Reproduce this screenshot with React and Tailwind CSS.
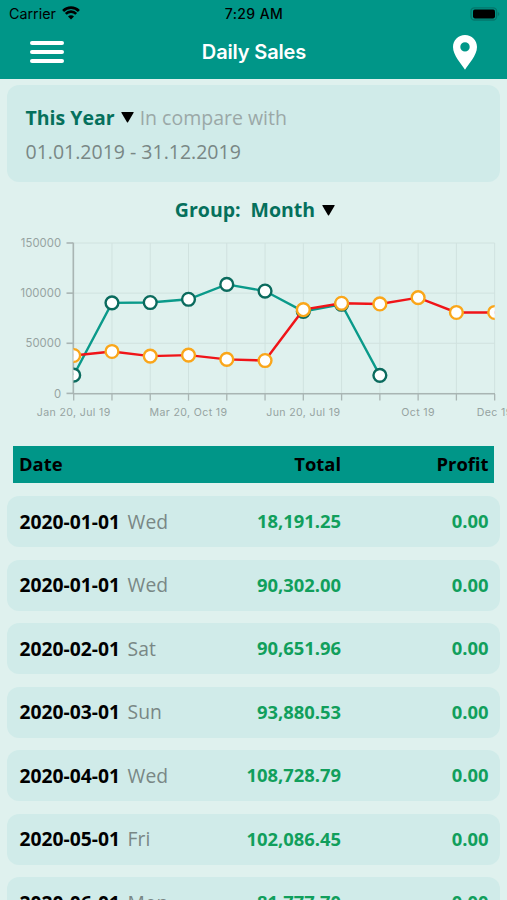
import React from 'react';

const rows = [
  { date: '2020-01-01', day: 'Wed', total: 18191.25, profit: 0 },
  { date: '2020-01-01', day: 'Wed', total: 90302, profit: 0 },
  { date: '2020-02-01', day: 'Sat', total: 90651.96, profit: 0 },
  { date: '2020-03-01', day: 'Sun', total: 93880.53, profit: 0 },
  { date: '2020-04-01', day: 'Wed', total: 108728.79, profit: 0 },
  { date: '2020-05-01', day: 'Fri', total: 102086.45, profit: 0 },
  { date: '2020-06-01', day: 'Mon', total: 81777.7, profit: 0 },
];

const current = [18191, 90302, 90652, 93880, 108729, 102086, 81778, 88900, 18000];
const previous = [37800, 41800, 37200, 38200, 33900, 32800, 83500, 89900, 89200, 95500, 80700, 80700];

const xLabels = [
  { i: 0, text: 'Jan 20, Jul 19' },
  { i: 3, text: 'Mar 20, Oct 19' },
  { i: 6, text: 'Jun 20, Jul 19' },
  { i: 9, text: 'Oct 19' },
  { i: 11, text: 'Dec 19' },
];

const months = [0, 1, 2, 3, 4, 5, 6, 7, 8, 9, 10, 11];
const ticks = [0, 50000, 100000, 150000];

const format = (val) => val.toLocaleString('en-US', { minimumFractionDigits: 2, maximumFractionDigits: 2 });

// chart scales
const px = (i) => 73.7 + i * 38.27;
const py = (v) => 163.4 - (v / 150000) * 150.4;
const toPoints = (values) => values.map((v, i) => `${px(i)},${py(v)}`).join(' ');

const Series = ({ values, line, dot }) => (
  <g>
    <polyline points={toPoints(values)} fill="none" stroke={line} strokeWidth="2.4" />
    {values.map((v, i) => (
      <circle key={i} cx={px(i)} cy={py(v)} r="6.4" fill="#fff" stroke={dot} strokeWidth="2.4" />
    ))}
  </g>
);

const SalesChart = () => (
  <svg width="507" height="200" className="block shrink-0 font-['Inter',sans-serif]">
    <defs>
      <clipPath id="plot">
        <rect x="73.5" y="0" width="421.2" height="170" />
      </clipPath>
    </defs>

    <g stroke="#d0e2df" strokeWidth="1">
      {ticks.map((t) => <line key={t} x1="74" x2="494.7" y1={py(t)} y2={py(t)} />)}
      {months.map((m) => <line key={m} x1={px(m)} x2={px(m)} y1="13" y2="163" />)}
    </g>

    <g stroke="#a9b5b3" strokeWidth="1.6">
      <line x1="73.3" x2="73.3" y1="12.5" y2="164" />
      <line x1="73" x2="495" y1="163.8" y2="163.8" />
      {ticks.map((t) => <line key={t} x1="66.5" x2="73" y1={py(t)} y2={py(t)} />)}
      {months.map((m) => <line key={m} x1={px(m)} x2={px(m)} y1="164" y2="170.5" strokeWidth="1.3" />)}
    </g>

    <g clipPath="url(#plot)">
      <Series values={current} line="#0a9a8a" dot="#0b6b5e" />
      <Series values={previous} line="#f01418" dot="#faa61a" />
    </g>

    <g fill="#96a3a1" fontSize="11.3" letterSpacing="0.1">
      {ticks.map((t) => <text key={t} x="61.3" y={py(t) + 4.2} textAnchor="end">{t}</text>)}
    </g>
    <g fill="#96a3a1" fontSize="10.6" letterSpacing="0.35">
      {xLabels.map((l) => <text key={l.i} x={px(l.i)} y="186.2" textAnchor="middle">{l.text}</text>)}
    </g>
  </svg>
);

const Caret = () => (
  <svg width="13" height="11" viewBox="0 0 13 11" className="shrink-0">
    <path d="M.8 0h11.4q.8 0 .4.8L7 10.2q-.5.8-1 0L.4.8Q0 0 .8 0z" fill="#000" />
  </svg>
);

const Header = () => (
  <header className="h-[79px] shrink-0 bg-[#009688]">
    <div className="grid h-[27px] grid-cols-3 items-center pl-[8px] pr-[7px] text-black">
      <div className="flex items-center gap-[6px] pl-[1px]">
        <span className="pt-px text-[14.3px] leading-none">Carrier</span>
        <svg width="18" height="14" viewBox="0 0 18 14">
          <path d="M9 13.6 6 10.5a4.2 4.2 0 0 1 6 0z" fill="#000" />
          <path d="M3.8 7.9a7.3 7.3 0 0 1 10.4 0M1.1 5a11.1 11.1 0 0 1 15.8 0" fill="none" stroke="#000" strokeWidth="2.7" />
        </svg>
      </div>
      <span className="text-center text-[14px] font-medium leading-none tracking-[0.4px]">7:29 AM</span>
      <svg width="30" height="14" viewBox="0 0 30 14" className="justify-self-end">
        <rect x="1" y=".8" width="25.6" height="12.2" rx="3.5" fill="none" stroke="#04776c" strokeWidth="1.3" />
        <rect x="3" y="2.6" width="22" height="8.8" rx="1.8" fill="#000" />
        <path d="M27.8 5v4q1.6-.5 1.6-2t-1.6-2z" fill="#04776c" />
      </svg>
    </div>

    <div className="grid h-[50px] grid-cols-[1fr_auto_1fr] items-center pl-[30px] pr-[29px]">
      <div className="flex w-[34px] flex-col gap-[5px]">
        <span className="h-[4px] rounded-[2px] bg-white"></span>
        <span className="h-[4px] rounded-[2px] bg-white"></span>
        <span className="h-[4px] rounded-[2px] bg-white"></span>
      </div>
      <h1 className="text-[20px] font-semibold leading-none tracking-[-0.15px] text-white">Daily Sales</h1>
      <svg width="26" height="35" viewBox="0 0 26 35" className="justify-self-end">
        <path d="M13 0C6.2 0 1 5.2 1 12c0 8.4 8.6 17.2 12 22.8C16.4 29.2 25 20.4 25 12 25 5.2 19.8 0 13 0zm0 7.2a4.7 4.7 0 1 1 0 9.4 4.7 4.7 0 0 1 0-9.4z" fill="#fff" />
      </svg>
    </div>
  </header>
);

const App = () => {
  return (
    <div className="flex h-[900px] w-[507px] flex-col overflow-hidden bg-[#dff1ee] font-['Inter',sans-serif]">
      <Header />

      {/* Period filter */}
      <section className="mx-[7px] mt-[6px] h-[97px] shrink-0 rounded-[12px] bg-[#d0ebe9] pl-[18.5px] pt-[15.5px] font-['Open_Sans',sans-serif] text-[19.5px] leading-[34px]">
        <div className="flex items-center">
          <span className="font-bold text-[#05705c]">This Year</span>
          <span className="ml-[6px] mr-[6px] flex"><Caret /></span>
          <span className="text-[#9ba8a7]">In compare with</span>
        </div>
        <div className="text-[#798785]">01.01.2019 - 31.12.2019</div>
      </section>

      <div className="mt-[11px] flex h-[34px] shrink-0 items-center justify-center pl-[3px] font-['Open_Sans',sans-serif] text-[19.5px] font-bold text-[#05705c]">
        <span>Group:</span>
        <span className="ml-[10px] mr-[7px]">Month</span>
        <Caret />
      </div>

      <div className="mt-[3px] shrink-0">
        <SalesChart />
      </div>

      {/* Sales table */}
      <div className="mx-[13px] mt-[15.5px] grid h-[37.5px] shrink-0 grid-cols-[150px_178px_1fr] items-center bg-[#009688] pr-[5.5px] font-['Open_Sans',sans-serif] text-[18.4px] font-bold text-black">
        <span className="pl-[6px]">Date</span>
        <span className="text-right">Total</span>
        <span className="text-right">Profit</span>
      </div>

      <div className="mt-[13px] flex flex-col gap-[12.5px] px-[7px] font-['Open_Sans',sans-serif]">
        {rows.map((row, idx) => (
          <div key={idx} className="grid h-[51px] shrink-0 grid-cols-[180px_154px_1fr] items-center rounded-[12px] bg-[#d0ebe9] pr-[11.5px] text-[19.3px]">
            <span className="whitespace-nowrap pl-[12.5px] pt-px text-[#798785]">
              <strong className="mr-[7.5px] font-bold text-black">{row.date}</strong>{row.day}
            </span>
            <span className="pb-px text-right text-[18.4px] font-bold text-[#119f5c]">{format(row.total)}</span>
            <span className="pb-px text-right text-[18.4px] font-bold text-[#119f5c]">{format(row.profit)}</span>
          </div>
        ))}
      </div>
    </div>
  );
};

export default App;
